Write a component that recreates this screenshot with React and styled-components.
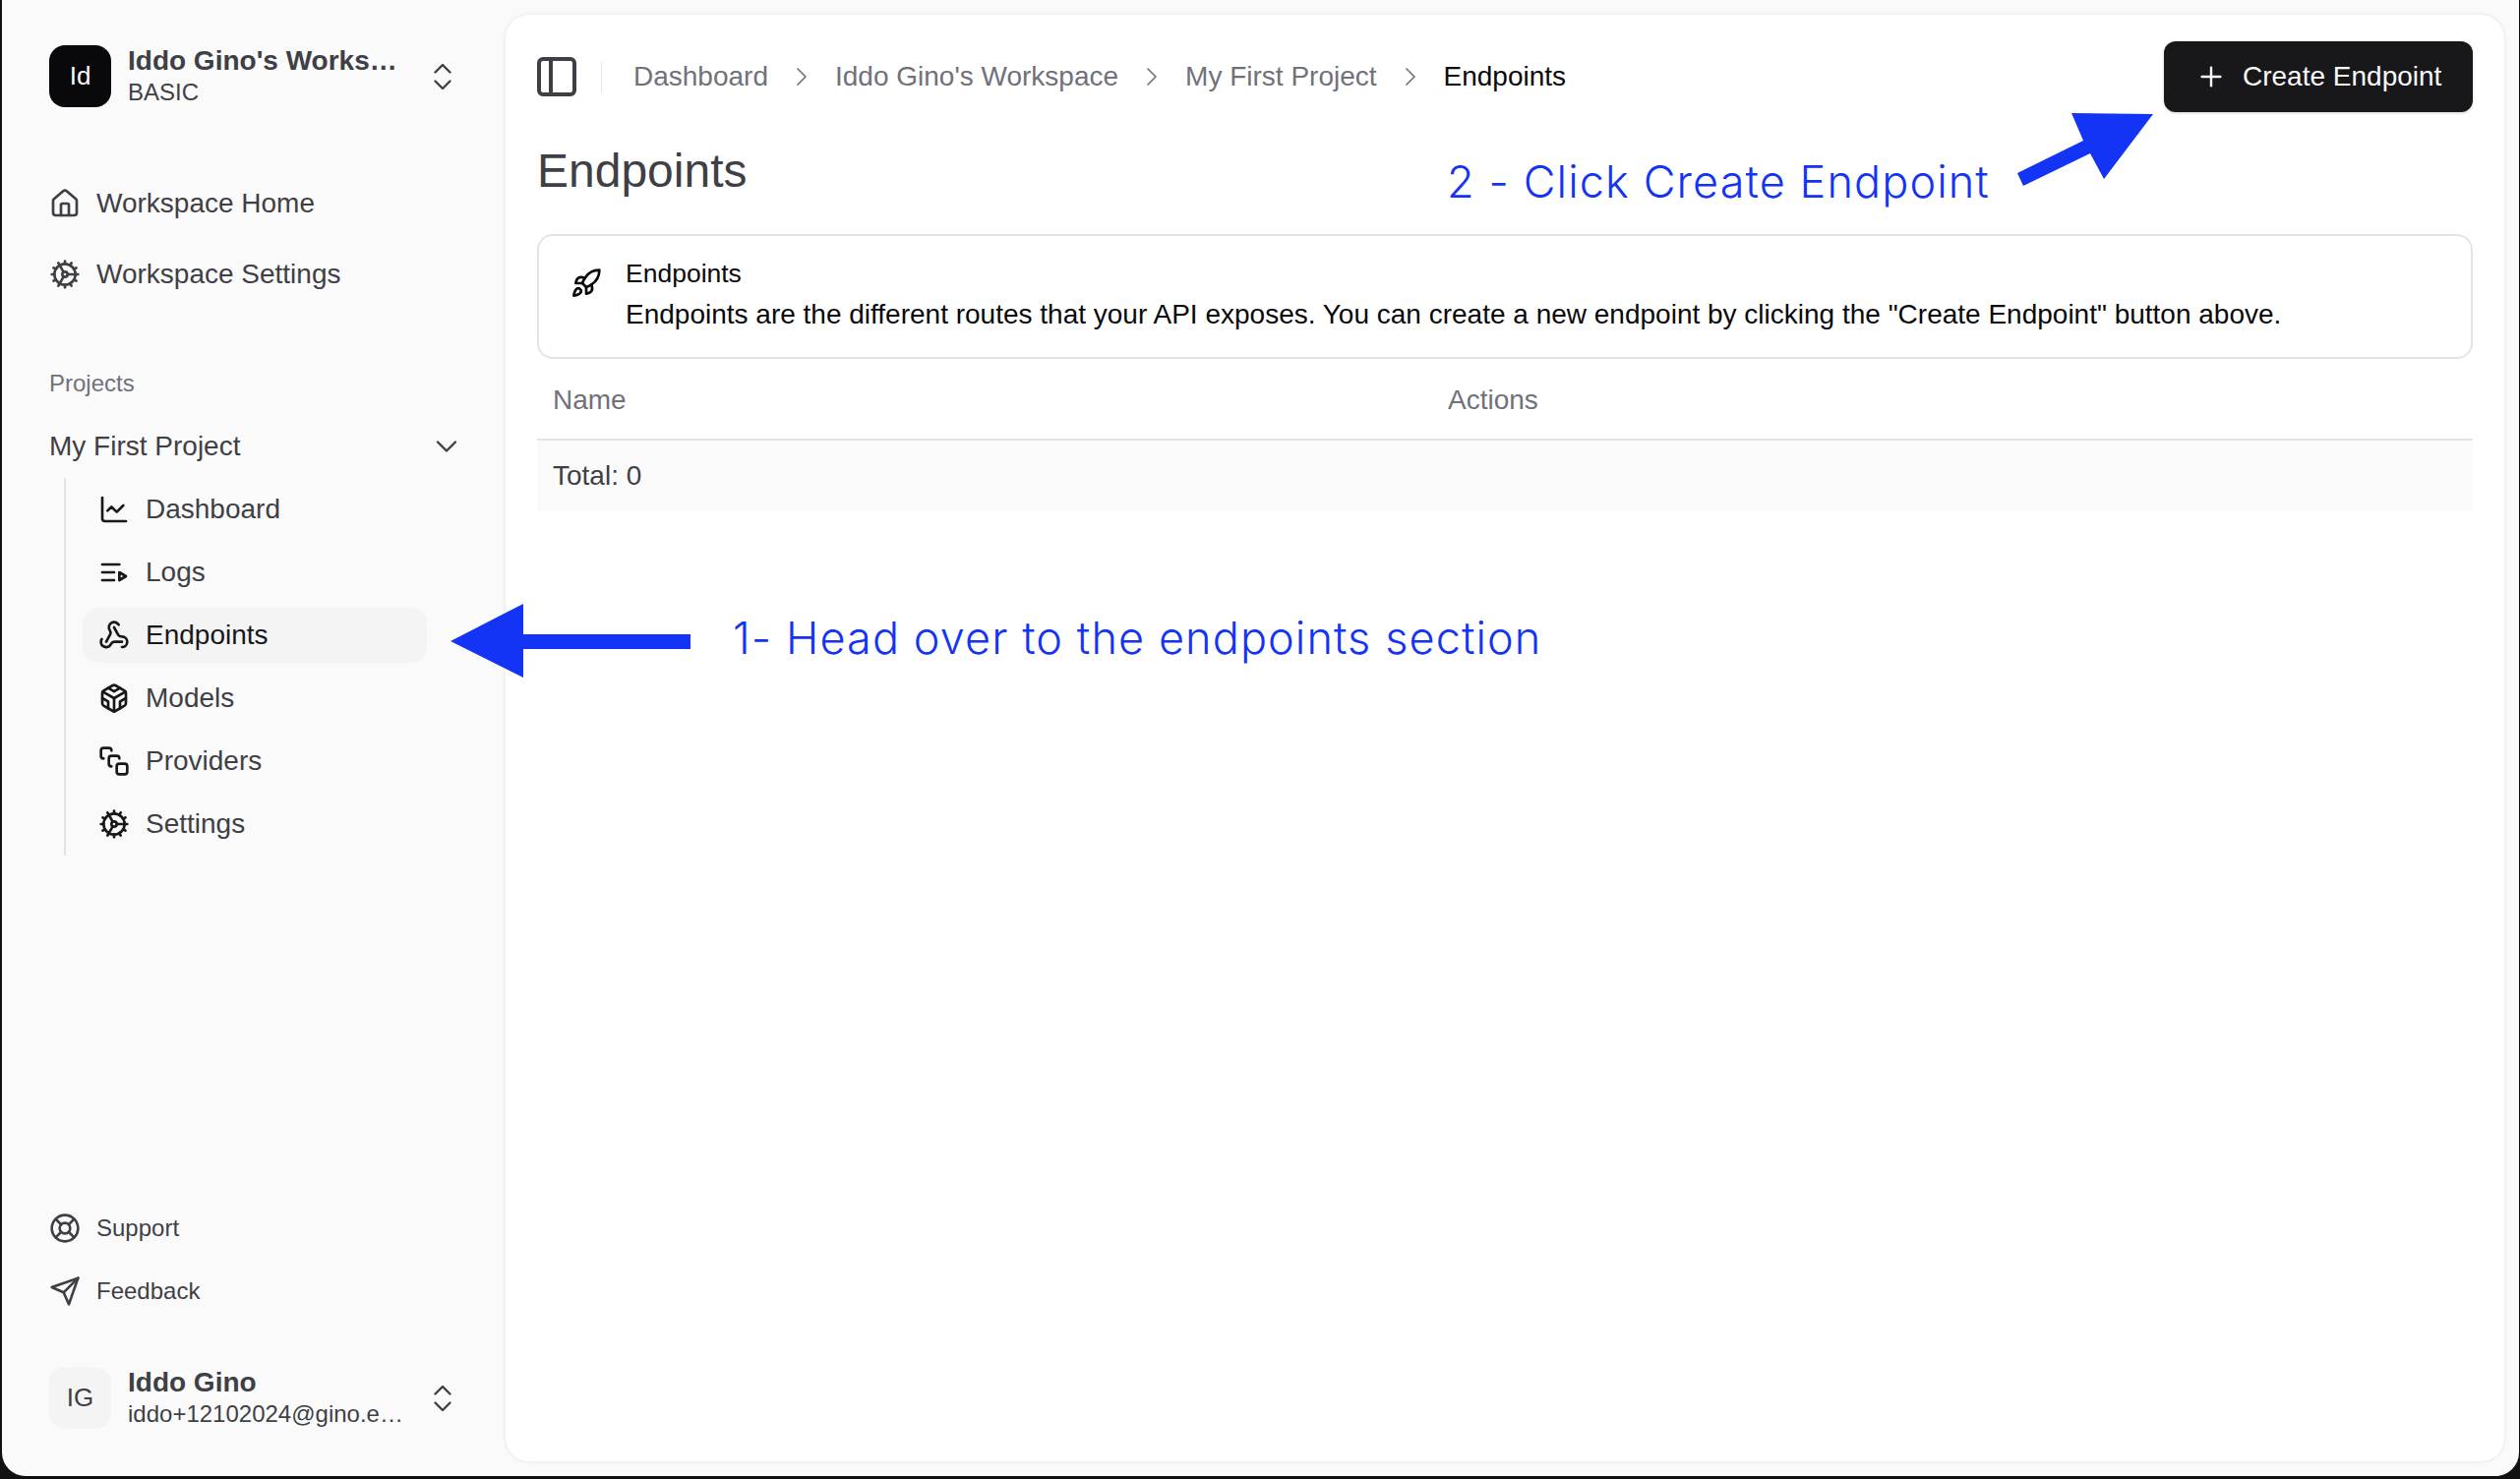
import React from 'react'
import styled, { createGlobalStyle } from 'styled-components'
import {
  House,
  Cog,
  ChevronsUpDown,
  ChevronDown,
  ChevronRight,
  ChartLine,
  Webhook,
  Codesandbox,
  SquareStack,
  LifeBuoy,
  PanelLeft,
  Rocket,
  Plus,
} from 'lucide-react'

const LineIcon = ({ children }) => (
  <svg viewBox="0 0 24 24" width="32" height="32" fill="none" stroke="currentColor" strokeWidth="2" strokeLinecap="round" strokeLinejoin="round">
    {children}
  </svg>
)

const SendIcon = () => (
  <LineIcon>
    <path d="m22 2-7 20-4-9-9-4Z" />
    <path d="M22 2 11 13" />
  </LineIcon>
)

const LogsIcon = () => (
  <LineIcon>
    <path d="M12 12H3" />
    <path d="M16 6H3" />
    <path d="M12 18H3" />
    <path d="m16 12 5 3-5 3v-6Z" />
  </LineIcon>
)

export default function App() {
  return (
    <>
      <GlobalStyle />
      <Frame>
        <Sidebar>
          <AccountRow>
            <Avatar $dark>Id</Avatar>
            <AccountText>
              <AccountName>Iddo Gino's Workspace</AccountName>
              <AccountSub>BASIC</AccountSub>
            </AccountText>
            <SelectorIcon><ChevronsUpDown size={36} strokeWidth={1.6} /></SelectorIcon>
          </AccountRow>

          <TopNav>
            <NavRow><House size={32} />Workspace Home</NavRow>
            <NavRow><Cog size={32} />Workspace Settings</NavRow>
          </TopNav>

          <SectionLabel>Projects</SectionLabel>
          <ProjectRow>
            My First Project
            <ChevronDown size={36} strokeWidth={1.6} />
          </ProjectRow>
          <Tree>
            <TreeItem><ChartLine size={32} />Dashboard</TreeItem>
            <TreeItem><LogsIcon />Logs</TreeItem>
            <TreeItem $active><Webhook size={32} />Endpoints</TreeItem>
            <TreeItem><Codesandbox size={32} />Models</TreeItem>
            <TreeItem><SquareStack size={32} />Providers</TreeItem>
            <TreeItem><Cog size={32} />Settings</TreeItem>
          </Tree>

          <Spacer />

          <FooterNav>
            <FooterRow><LifeBuoy size={32} />Support</FooterRow>
            <FooterRow><SendIcon />Feedback</FooterRow>
          </FooterNav>

          <AccountRow>
            <Avatar>IG</Avatar>
            <AccountText>
              <AccountName>Iddo Gino</AccountName>
              <AccountSub>iddo+12102024@gino.engineering</AccountSub>
            </AccountText>
            <SelectorIcon><ChevronsUpDown size={36} strokeWidth={1.6} /></SelectorIcon>
          </AccountRow>
        </Sidebar>

        <Main>
          <TopBar>
            <PanelToggle><PanelLeft size={48} /></PanelToggle>
            <Divider />
            <Crumbs>
              <Crumb>Dashboard</Crumb>
              <Sep><ChevronRight size={32} strokeWidth={1.3} /></Sep>
              <Crumb>Iddo Gino's Workspace</Crumb>
              <Sep><ChevronRight size={32} strokeWidth={1.3} /></Sep>
              <Crumb>My First Project</Crumb>
              <Sep><ChevronRight size={32} strokeWidth={1.3} /></Sep>
              <Crumb $current>Endpoints</Crumb>
            </Crumbs>
            <CreateButton><Plus size={32} strokeWidth={1.8} />Create Endpoint</CreateButton>
          </TopBar>

          <Title>Endpoints</Title>

          <InfoBox>
            <RocketSlot><Rocket size={32} /></RocketSlot>
            <div>
              <InfoTitle>Endpoints</InfoTitle>
              <InfoBody>Endpoints are the different routes that your API exposes. You can create a new endpoint by clicking the "Create Endpoint" button above.</InfoBody>
            </div>
          </InfoBox>

          <TableHead>
            <NameCell>Name</NameCell>
            <div>Actions</div>
          </TableHead>
          <TableFoot>Total: 0</TableFoot>
        </Main>

        <Arrows viewBox="0 0 2562 1504" width="2562" height="1504">
          <polygon points="458,652 532,614 532,645 702,645 702,660 532,660 532,689" fill="#1434f5" />
          <polygon points="2051,176 2118,143 2106,115 2189,116 2139,182 2125,156 2057,189" fill="#1434f5" />
        </Arrows>
        <Note $left={745} $top={616}>1- Head over to the endpoints section</Note>
        <Note $left={1471} $top={152}>2 - Click Create Endpoint</Note>
      </Frame>
    </>
  )
}

const GlobalStyle = createGlobalStyle`
  html, body {
    margin: 0;
    padding: 0;
    background: #111;
  }
  body {
    font-family: "Liberation Sans", Arial, sans-serif;
  }
`

const Frame = styled.div`
  position: relative;
  width: 2559px;
  height: 1501px;
  margin-left: 2px;
  display: flex;
  overflow: hidden;
  background: #fafafa;
  border-radius: 0 0 24px 24px;
`

const Sidebar = styled.aside`
  width: 512px;
  flex-shrink: 0;
  box-sizing: border-box;
  padding: 46px 48px 48px;
  display: flex;
  flex-direction: column;
`

const AccountRow = styled.div`
  display: flex;
  align-items: center;
  height: 63px;
  width: 418px;
  flex-shrink: 0;
`

const Avatar = styled.div`
  width: 63px;
  height: 63px;
  flex-shrink: 0;
  border-radius: 16px;
  display: flex;
  align-items: center;
  justify-content: center;
  font-size: 26px;
  background: ${p => (p.$dark ? '#09090b' : '#f4f4f5')};
  color: ${p => (p.$dark ? '#fafafa' : '#3f3f46')};
`

const AccountText = styled.div`
  margin-left: 17px;
  width: 280px;
  min-width: 0;
  color: #3f3f46;
`

const AccountName = styled.div`
  font-size: 28px;
  line-height: 32px;
  font-weight: 700;
  white-space: nowrap;
  overflow: hidden;
  text-overflow: ellipsis;
`

const AccountSub = styled.div`
  font-size: 24px;
  line-height: 32px;
  white-space: nowrap;
  overflow: hidden;
  text-overflow: ellipsis;
`

const SelectorIcon = styled.div`
  margin-left: auto;
  display: flex;
  color: #3f3f46;
`

const TopNav = styled.nav`
  margin-top: 70px;
  display: flex;
  flex-direction: column;
  gap: 16px;
`

const NavRow = styled.div`
  height: 56px;
  display: flex;
  align-items: center;
  gap: 16px;
  font-size: 28px;
  color: #3f3f46;
`

const SectionLabel = styled.div`
  margin-top: 67px;
  font-size: 24px;
  line-height: 32px;
  color: #71717a;
`

const ProjectRow = styled.div`
  margin: 20px -6px 0 0;
  height: 56px;
  display: flex;
  align-items: center;
  justify-content: space-between;
  font-size: 28px;
  color: #3f3f46;
`

const Tree = styled.div`
  margin-left: 15px;
  margin-top: 4px;
  border-left: 2px solid #e4e4e7;
  padding: 4px 0 4px 17px;
  width: 350px;
  display: flex;
  flex-direction: column;
  gap: 8px;
`

const TreeItem = styled.div`
  height: 56px;
  display: flex;
  align-items: center;
  gap: 16px;
  padding-left: 16px;
  border-radius: 16px;
  font-size: 28px;
  color: ${p => (p.$active ? '#18181b' : '#3f3f46')};
  background: ${p => (p.$active ? '#f4f4f5' : 'transparent')};
  svg {
    color: #18181b;
    flex-shrink: 0;
  }
`

const Spacer = styled.div`
  flex: 1;
`

const FooterNav = styled.div`
  display: flex;
  flex-direction: column;
  gap: 8px;
  margin-bottom: 49px;
`

const FooterRow = styled.div`
  height: 56px;
  display: flex;
  align-items: center;
  gap: 16px;
  font-size: 24px;
  color: #3f3f46;
`

const Main = styled.main`
  margin: 15px 0 15px 0;
  width: 2032px;
  flex-shrink: 0;
  background: #fff;
  border-radius: 24px;
  box-sizing: border-box;
  padding: 27px 32px 0 32px;
  box-shadow: 0 0 4px rgba(0, 0, 0, 0.1);
`

const TopBar = styled.div`
  height: 72px;
  display: flex;
  align-items: center;
`

const PanelToggle = styled.div`
  display: flex;
  margin-left: -4px;
  color: #3f3f46;
`

const Divider = styled.div`
  width: 1px;
  height: 31px;
  margin-left: 21px;
  background: #e4e4e7;
`

const Crumbs = styled.div`
  margin-left: 32px;
  display: flex;
  align-items: center;
  gap: 18px;
  flex: 1;
`

const Crumb = styled.span`
  font-size: 28px;
  color: ${p => (p.$current ? '#09090b' : '#71717a')};
`

const Sep = styled.span`
  display: flex;
  color: #71717a;
`

const CreateButton = styled.div`
  width: 314px;
  height: 72px;
  box-sizing: border-box;
  padding-left: 32px;
  display: flex;
  align-items: center;
  gap: 16px;
  background: #18181b;
  color: #fafafa;
  border-radius: 12px;
  font-size: 28px;
  box-shadow: 0 1px 3px rgba(0, 0, 0, 0.2);
`

const Title = styled.h1`
  margin: 24px 0 0;
  font-size: 48px;
  line-height: 72px;
  font-weight: 400;
  color: #3f3f46;
`

const InfoBox = styled.div`
  margin-top: 28px;
  height: 127px;
  box-sizing: border-box;
  border: 2px solid #e4e4e7;
  border-radius: 16px;
  display: flex;
  align-items: flex-start;
  padding: 17px 0 0 32px;
  color: #09090b;
`

const RocketSlot = styled.div`
  display: flex;
  margin: 15px 24px 0 0;
`

const InfoTitle = styled.div`
  font-size: 26.5px;
  line-height: 42px;
`

const InfoBody = styled.div`
  font-size: 28px;
  line-height: 42px;
`

const TableHead = styled.div`
  height: 83px;
  box-sizing: border-box;
  padding-top: 2px;
  display: flex;
  align-items: center;
  border-bottom: 2px solid #e4e4e7;
  font-size: 28px;
  color: #71717a;
`

const NameCell = styled.div`
  width: 926px;
  padding-left: 16px;
  box-sizing: border-box;
`

const TableFoot = styled.div`
  height: 72px;
  display: flex;
  align-items: center;
  padding-left: 16px;
  background: #fafafa;
  font-size: 28px;
  color: #3f3f46;
`

const Arrows = styled.svg`
  position: absolute;
  left: -2px;
  top: 0;
  pointer-events: none;
`

const Note = styled.div`
  position: absolute;
  left: ${p => p.$left - 2}px;
  top: ${p => p.$top}px;
  font-family: Inter, sans-serif;
  font-size: 45px;
  font-weight: 300;
  letter-spacing: 1.1px;
  line-height: 66px;
  color: #1434f5;
  white-space: nowrap;
`
